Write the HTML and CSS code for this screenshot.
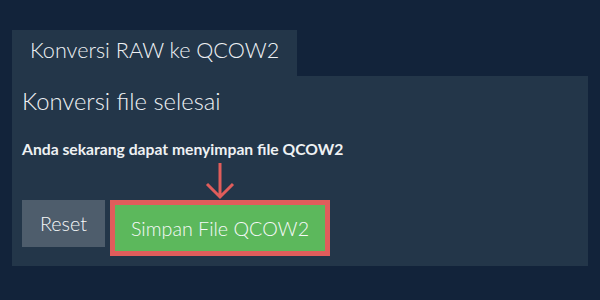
FILE: index.html
```html
<!DOCTYPE html>
<html>
<head>
<meta charset="utf-8">
<link rel="stylesheet" href="styles.css">
</head>
<body>
<div class="page">
  <div class="tabs">
    <div class="tab">Konversi RAW ke QCOW2</div>
  </div>
  <div class="panel">
    <h1 class="title">Konversi file selesai</h1>
    <p class="note">Anda sekarang dapat menyimpan file QCOW2</p>
    <div class="actions">
      <button class="btn btn-reset">Reset</button>
      <div class="save-wrap">
        <svg class="arrow" width="30" height="38" viewBox="0 0 30 38">
          <path d="M15 1 V35 M2 22 L15 35 L28 22" fill="none" stroke="#e05d5b" stroke-width="3"/>
        </svg>
        <button class="btn btn-save">Simpan File QCOW2</button>
      </div>
    </div>
  </div>
</div>
</body>
</html>
```
FILE: styles.css
```css
html, body {
  margin: 0;
  padding: 0;
  background: #12233a;
  font-family: Lato, "Noto Sans", sans-serif;
  color: #e8ecef;
}
.page {
  padding: 30px 12px 0 12px;
}
.tabs {
  display: flex;
}
.tab {
  background: #233649;
  font-size: 21.6px;
  font-weight: 300;
  line-height: 30px;
  padding: 5px 18px 11px 18px;
  color: #eef1f4;
}
.panel {
  background: #233649;
  padding: 10px 10px 10px 10px;
  height: 170px;
}
.title {
  margin: 0;
  font-size: 23.8px;
  font-weight: 300;
  line-height: 30px;
  color: #eef1f4;
}
.note {
  margin: 23px 0 0 0;
  font-size: 15.7px;
  font-weight: 700;
  line-height: 20px;
  color: #eef1f3;
}
.actions {
  display: flex;
  align-items: flex-start;
  gap: 5px;
  margin-top: 41px;
}
.btn {
  font-family: Lato, "Noto Sans", sans-serif;
  font-size: 19.7px;
  font-weight: 300;
  color: #f6f8f9;
  border: none;
  margin: 0;
  cursor: pointer;
}
.btn-reset {
  background: #4e5d6c;
  height: 47px;
  padding: 0;
  width: 83px;
}
.save-wrap {
  position: relative;
}
.arrow {
  position: absolute;
  left: 95px;
  top: -38px;
}
.btn-save {
  background: #5cb85c;
  border: 5px solid #e05d5b;
  height: 56px;
  width: 220px;
  padding: 0;
  display: block;
}
```
